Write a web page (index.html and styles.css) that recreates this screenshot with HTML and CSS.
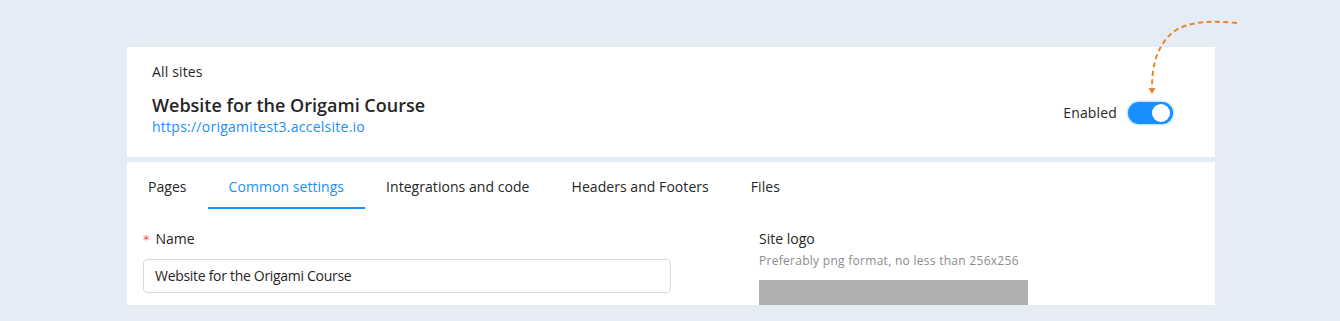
FILE: index.html
```html
<!DOCTYPE html>
<html lang="en">
<head>
<meta charset="utf-8">
<title>Website for the Origami Course</title>
<link rel="stylesheet" href="styles.css">
</head>
<body>
<div class="page">
  <section class="card header-card">
    <div class="crumb">All sites</div>
    <div class="header-row">
      <div class="site-info">
        <h1 class="site-title">Website for the Origami Course</h1>
        <a class="site-url" href="#">https://origamitest3.accelsite.io</a>
      </div>
      <div class="status">
        <span class="status-label">Enabled</span>
        <span class="switch"><span class="knob"></span></span>
      </div>
    </div>
  </section>
  <section class="card settings-card">
    <nav class="tabs">
      <span class="tab">Pages</span>
      <span class="tab active">Common settings</span>
      <span class="tab">Integrations and code</span>
      <span class="tab">Headers and Footers</span>
      <span class="tab">Files</span>
    </nav>
    <div class="form">
      <div class="field">
        <label class="label"><span class="req">*</span>Name</label>
        <div class="input">Website for the Origami Course</div>
      </div>
      <div class="field">
        <div class="label">Site logo</div>
        <div class="hint">Preferably png format, no less than 256x256</div>
        <div class="logo-box"></div>
      </div>
    </div>
  </section>
  <svg class="arrow" width="120" height="90" viewBox="1140 10 120 90" aria-hidden="true">
    <path d="M1237 23 C1205 20 1180 22 1167 38 C1155 52 1152 70 1152 88" fill="none" stroke="#e8862c" stroke-width="2" stroke-dasharray="5 3.5"/>
    <path d="M1148.5 88 L1155.5 88 L1152 94 Z" fill="#e8862c"/>
  </svg>
</div>
</body>
</html>
```

FILE: styles.css
```css
html, body {
  margin: 0;
  padding: 0;
  background: #e4ecf6;
  font-family: "Open Sans", "Noto Sans", sans-serif;
  color: #262626;
  letter-spacing: 0.15px;
}
.page {
  position: relative;
  width: 1340px;
  height: 321px;
  padding: 47px 125px 0 127px;
  box-sizing: border-box;
}
.card {
  background: #fff;
  width: 1088px;
}
.header-card {
  height: 110px;
  box-sizing: border-box;
  padding: 14px 42px 0 25px;
}
.crumb {
  font-size: 14px;
  line-height: 22px;
}
.header-row {
  display: flex;
  justify-content: space-between;
  align-items: flex-start;
  margin-top: 11px;
}
.site-title {
  margin: 0;
  font-size: 18px;
  font-weight: 600;
  line-height: 23px;
  letter-spacing: 0;
}
.site-url {
  display: block;
  font-size: 14px;
  line-height: 20px;
  color: #1890ff;
  text-decoration: none;
  letter-spacing: 0.25px;
}
.status {
  display: flex;
  align-items: center;
  gap: 11px;
  margin-top: 8px;
}
.status-label {
  font-size: 14px;
  line-height: 22px;
}
.switch {
  position: relative;
  width: 45px;
  height: 22px;
  border-radius: 11px;
  background: #1890ff;
  box-shadow: 0 0 2px 1px rgba(24, 144, 255, 0.35);
}
.knob {
  position: absolute;
  top: 2px;
  right: 3px;
  width: 18px;
  height: 18px;
  border-radius: 50%;
  background: #fff;
}
.settings-card {
  margin-top: 5px;
  height: 143px;
  overflow: hidden;
}
.tabs {
  display: flex;
}
.tab {
  font-size: 14px;
  line-height: 22px;
  padding: 14px 21px 9px;
  border-bottom: 2px solid transparent;
  letter-spacing: 0.05px;
}
.tab.active {
  color: #1890ff;
  border-bottom-color: #1890ff;
}
.form {
  display: grid;
  grid-template-columns: 528px 270px;
  column-gap: 88px;
  padding: 19px 16px 0;
}
.label {
  display: block;
  font-size: 14px;
  line-height: 22px;
  letter-spacing: 0;
}
.req {
  color: #ff4d4f;
  margin-right: 6px;
  font-family: "DejaVu Sans", sans-serif;
  font-size: 13px;
}
.input {
  margin-top: 8px;
  height: 34px;
  box-sizing: border-box;
  border: 1px solid #d9d9d9;
  border-radius: 4px;
  padding: 0 11px;
  font-size: 14px;
  line-height: 32px;
  letter-spacing: -0.3px;
}
.hint {
  font-size: 12px;
  line-height: 20px;
  color: #8c8c8c;
  margin-top: 1px;
  letter-spacing: 0.28px;
}
.logo-box {
  margin-top: 9px;
  width: 269px;
  height: 150px;
  background: #b0b0b0;
}
.arrow {
  position: absolute;
  left: 1140px;
  top: 10px;
}
```
